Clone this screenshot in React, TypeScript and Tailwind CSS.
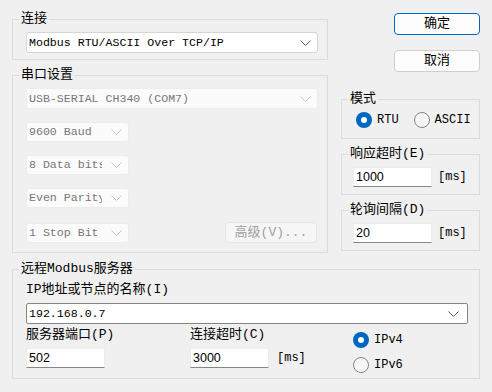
import type { ReactNode } from 'react';

function Chevron({ light }: { light?: boolean }) {
  return (
    <svg width="11" height="6" viewBox="0 0 11 6" className="shrink-0">
      <path d="M0.5 0.5L5.5 5.5L10.5 0.5" fill="none" stroke={light ? '#c6c6c6' : '#5f5f5f'} strokeWidth="1" />
    </svg>
  );
}

function Group({ title, className, children }: { title: string; className?: string; children: ReactNode }) {
  return (
    <fieldset className={`m-0 min-w-0 border border-[#dcdcdc] px-[6px] ${className ?? ''}`}>
      <legend className="px-[2px] text-[13px] leading-[16px]">{title}</legend>
      {children}
    </fieldset>
  );
}

function Radio({ checked, label }: { checked?: boolean; label: string }) {
  return (
    <div className="flex h-[17px] items-center">
      {checked ? (
        <span className="flex h-[16px] w-[16px] items-center justify-center rounded-full bg-[#0067c0]">
          <span className="h-[6px] w-[6px] rounded-full bg-white" />
        </span>
      ) : (
        <span className="h-[16px] w-[16px] rounded-full border border-[#858585] bg-[#f6f6f6]" />
      )}
      <span className="ml-[5px] text-[12px]">{label}</span>
    </div>
  );
}

function SmallCombo({ text }: { text: string }) {
  return (
    <div className="flex h-[20px] w-[103px] items-center justify-between rounded-[3px] border border-[#ececec] bg-[#fbfbfb] pl-[2px] pr-[6px] text-[11.6px] text-[#777]">
      <span className="w-[73px] overflow-hidden whitespace-nowrap">{text}</span>
      <Chevron light />
    </div>
  );
}

function TextBox({ value }: { value: string }) {
  return (
    <div className="flex h-[20px] w-[79px] items-center border border-[#ececec] border-b-[#868686] bg-white pl-[2px] font-['Liberation_Sans',sans-serif] text-[12.5px]">
      {value}
    </div>
  );
}

export default function App() {
  return (
    <div className="h-[392px] w-[492px] overflow-hidden bg-[#f0f0f0] font-['Liberation_Mono','Noto_Sans_CJK_SC',monospace] text-[13px] leading-[16px] text-black">
      <div className="flex pl-[12px] pt-[11px]">
        {/* left column */}
        <div className="flex w-[316px] flex-col">
          <Group title="连接" className="pb-[6px]">
            <div className="pl-[7px] pt-[5px]">
              <div className="flex h-[21px] w-[292px] items-center justify-between rounded-[3px] border border-[#d5d5d5] bg-white pl-[2px] pr-[6px] text-[11.6px]">
                <span>Modbus RTU/ASCII Over TCP/IP</span>
                <Chevron />
              </div>
            </div>
          </Group>

          <Group title="串口设置" className="mt-[7px] pb-[9px]">
            <div className="flex flex-col pl-[7px] pt-[5px]">
              <div className="flex h-[21px] w-[292px] items-center justify-between rounded-[3px] border border-[#ececec] bg-[#fbfbfb] pl-[2px] pr-[6px] text-[11.6px] text-[#777]">
                <span>USB-SERIAL CH340 (COM7)</span>
                <Chevron light />
              </div>
              <div className="mt-[13px]">
                <SmallCombo text="9600 Baud" />
              </div>
              <div className="mt-[13px]">
                <SmallCombo text="8 Data bits" />
              </div>
              <div className="mt-[13px]">
                <SmallCombo text="Even Parity" />
              </div>
              <div className="mt-[14px] flex w-[291px] items-center justify-between">
                <SmallCombo text="1 Stop Bit" />
                <div className="flex h-[21px] w-[92px] items-center justify-center rounded-[4px] border border-[#e5e5e5] bg-[#f6f6f6] text-[#a0a0a0]">
                  高级(V)...
                </div>
              </div>
            </div>
          </Group>
        </div>

        {/* right column */}
        <div className="ml-[13px] flex w-[139px] flex-col">
          <div className="flex flex-col items-end">
            <div className="mt-[2px] flex h-[22px] w-[86px] items-center justify-center rounded-[4px] border border-[#0067c0] bg-[#fdfdfd]">
              确定
            </div>
            <div className="mt-[15px] flex h-[22px] w-[86px] items-center justify-center rounded-[4px] border border-[#d0d0d0] bg-[#fdfdfd]">
              取消
            </div>
          </div>

          <Group title="模式" className="mt-[19px] pb-[10px]">
            <div className="ml-[8px] mt-[4px] flex items-center gap-[15px]">
              <Radio checked label="RTU" />
              <Radio label="ASCII" />
            </div>
          </Group>

          <Group title="响应超时(E)" className="mt-[7px] pb-[7px]">
            <div className="ml-[5px] mt-[5px] flex items-center">
              <TextBox value="1000" />
              <span className="ml-[6px] text-[12px]">[ms]</span>
            </div>
          </Group>

          <Group title="轮询间隔(D)" className="mt-[7px] pb-[7px]">
            <div className="ml-[5px] mt-[5px] flex items-center">
              <TextBox value="20" />
              <span className="ml-[6px] text-[12px]">[ms]</span>
            </div>
          </Group>
        </div>
      </div>

      <div className="ml-[12px] mt-[8px] w-[468px]">
        <Group title="远程Modbus服务器" className="pb-[5px]">
          <div className="ml-[7px] flex flex-col">
            <div className="mt-[5px]">IP地址或节点的名称(I)</div>
            <div className="mt-[5px] flex h-[21px] w-[442px] items-center justify-between rounded-[2px] border border-[#868686] bg-white pl-[2px] pr-[8px] text-[11.6px]">
              <span>192.168.0.7</span>
              <Chevron />
            </div>
            <div className="flex">
              <div className="flex w-[164px] flex-col">
                <div className="mt-[3px]">服务器端口(P)</div>
                <div className="mt-[5px]">
                  <TextBox value="502" />
                </div>
              </div>
              <div className="flex w-[163px] flex-col">
                <div className="mt-[3px]">连接超时(C)</div>
                <div className="mt-[5px] flex items-center">
                  <TextBox value="3000" />
                  <span className="ml-[8px] text-[12px]">[ms]</span>
                </div>
              </div>
              <div className="mt-[7px] flex flex-col gap-[8px]">
                <Radio checked label="IPv4" />
                <Radio label="IPv6" />
              </div>
            </div>
          </div>
        </Group>
      </div>
    </div>
  );
}
